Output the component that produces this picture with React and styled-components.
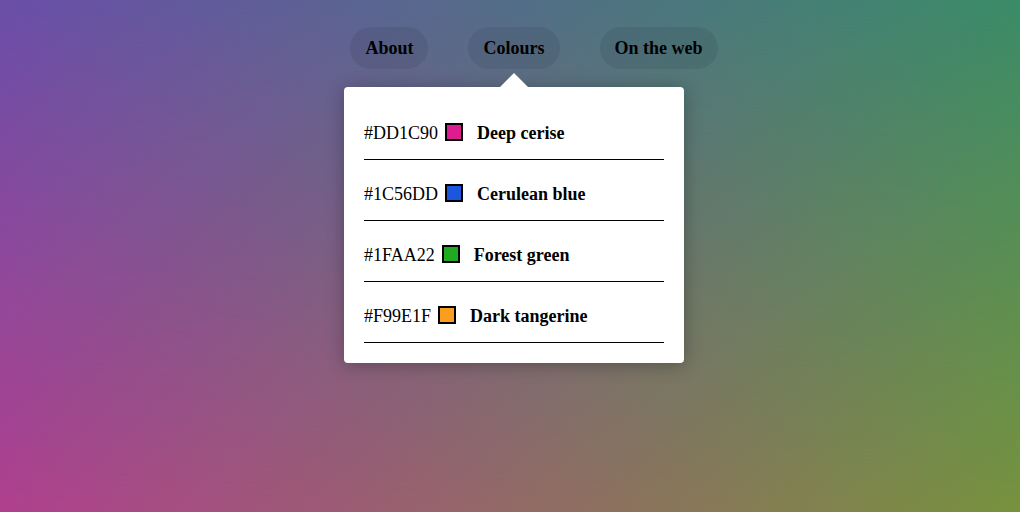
import styled, { createGlobalStyle } from "styled-components"

const GlobalStyle = createGlobalStyle`
  html, body {
    margin: 0;
    padding: 0;
  }
  body {
    font-family: "Liberation Serif", "Times New Roman", serif;
    color: #000;
  }
`

const Page = styled.div`
  position: relative;
  min-height: 100vh;
  background: linear-gradient(to right, #6b4fa9, #3b8c68);
  overflow: hidden;

  &::before {
    content: "";
    position: absolute;
    inset: 0;
    background: linear-gradient(to right, #b0408e, #77923e);
    -webkit-mask-image: linear-gradient(to bottom, transparent, #000);
    mask-image: linear-gradient(to bottom, transparent, #000);
  }
`

const Nav = styled.nav`
  position: relative;
  z-index: 1;
  display: flex;
  justify-content: center;
  gap: 40px;
  padding: 27px 0 0 48px;
`

const NavItem = styled.div`
  position: relative;
`

const Pill = styled.button`
  font-family: inherit;
  font-size: 18px;
  font-weight: 700;
  line-height: 21px;
  color: #000;
  border: none;
  border-radius: 21px;
  padding: 11px 15px 10px;
  background: rgba(20, 30, 50, 0.1);
  cursor: pointer;
`

const Popover = styled.div`
  position: absolute;
  top: 60px;
  left: 50%;
  transform: translateX(-50%);
  width: 340px;
  box-sizing: border-box;
  padding: 12px 20px 20px;
  background: #fff;
  border-radius: 4px;
  box-shadow: 0 2px 18px rgba(0, 0, 0, 0.28);

  &::before {
    content: "";
    position: absolute;
    top: -14px;
    left: 50%;
    margin-left: -14px;
    border: 14px solid transparent;
    border-top: none;
    border-bottom-color: #fff;
  }
`

const List = styled.ul`
  list-style: none;
  margin: 0;
  padding: 0;
`

const Row = styled.li`
  display: flex;
  align-items: center;
  height: 60px;
  border-bottom: 1px solid #000;
  font-size: 18px;
  line-height: 22px;
`

const Hex = styled.span`
  margin-top: 8px;
`

const Swatch = styled.span`
  width: 18px;
  height: 18px;
  box-sizing: border-box;
  border: 2px solid #000;
  margin: 6px 14px 0 7px;
  background: ${(p) => p.color};
`

const Name = styled.strong`
  margin-top: 8px;
  font-weight: 700;
`

const colours = [
  { hex: "#DD1C90", name: "Deep cerise" },
  { hex: "#1C56DD", name: "Cerulean blue" },
  { hex: "#1FAA22", name: "Forest green" },
  { hex: "#F99E1F", name: "Dark tangerine" },
]

const App = () => {
  return (
    <Page>
      <GlobalStyle />
      <Nav>
        <NavItem>
          <Pill>About</Pill>
        </NavItem>
        <NavItem>
          <Pill>Colours</Pill>
          <Popover>
            <List>
              {colours.map((c) => (
                <Row key={c.hex}>
                  <Hex>{c.hex}</Hex>
                  <Swatch color={c.hex} />
                  <Name>{c.name}</Name>
                </Row>
              ))}
            </List>
          </Popover>
        </NavItem>
        <NavItem>
          <Pill>On the web</Pill>
        </NavItem>
      </Nav>
    </Page>
  )
}

export default App
